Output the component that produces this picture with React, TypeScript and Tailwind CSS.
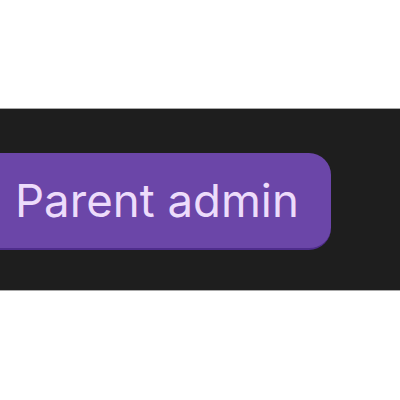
export default function App() {
  return (
    <div className="w-[400px] h-[400px] bg-white overflow-hidden" style={{ fontFamily: "Inter, 'Noto Sans', sans-serif" }}>
      <div className="mt-[108px] h-[183px] bg-[#1e1e1e] border-y border-[#a8a8a8] flex items-center">
        <div className="-ml-[20px] mt-[4px] h-[97px] w-[351px] rounded-[22px] bg-[#6b46a8] border-b-2 border-[#4f2d8c] flex items-center pl-[35px]">
          <span className="text-[45.6px] leading-none text-[#eddcfb] font-normal">Parent admin</span>
        </div>
      </div>
    </div>
  );
}
